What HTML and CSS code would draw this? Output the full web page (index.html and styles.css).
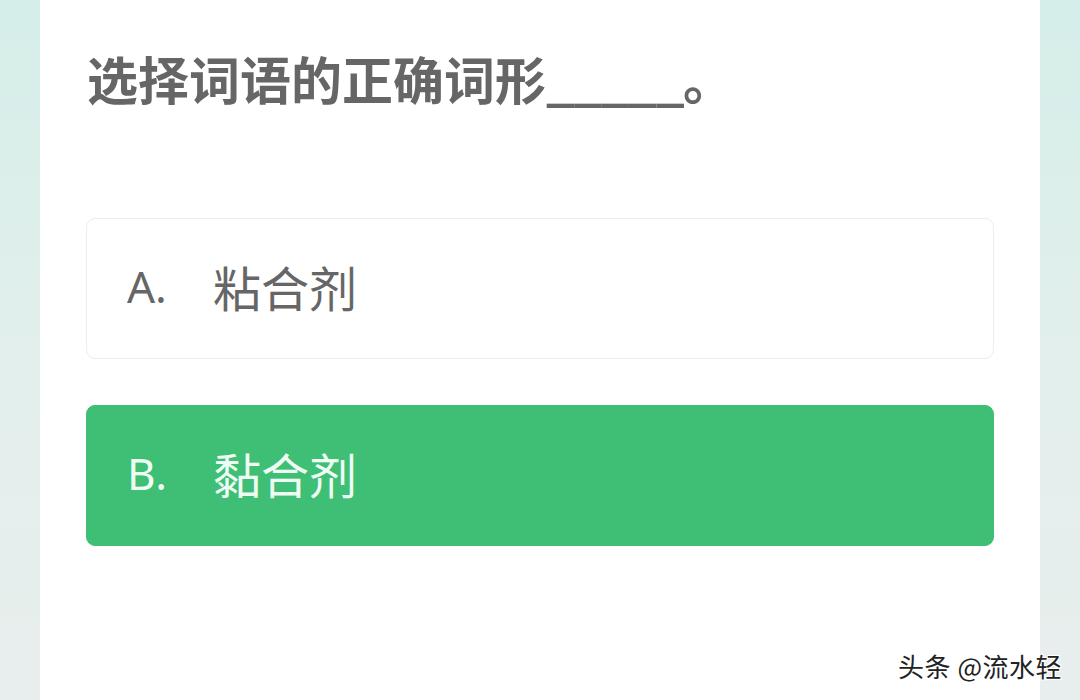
FILE: index.html
```html
<!DOCTYPE html>
<html lang="zh-CN">
<head>
<meta charset="utf-8">
<link rel="stylesheet" href="styles.css">
</head>
<body>
<div class="page">
  <div class="side side-left"></div>
  <main class="panel">
    <h1 class="question">选择词语的正确词形<span class="blank">_____</span>。</h1>
    <div class="options">
      <div class="option"><span class="label">A.</span><span class="text">粘合剂</span></div>
      <div class="option selected"><span class="label">B.</span><span class="text">黏合剂</span></div>
    </div>
    <div class="watermark">头条 @流水轻</div>
  </main>
  <div class="side side-right"></div>
</div>
</body>
</html>
```

FILE: styles.css
```css
* { box-sizing: border-box; }
html, body { margin: 0; padding: 0; }
body {
  width: 1080px;
  height: 700px;
  overflow: hidden;
  font-family: "Noto Sans CJK SC", "Noto Sans", sans-serif;
}
.page {
  display: flex;
  width: 1080px;
  height: 700px;
}
.side {
  width: 40px;
  flex: none;
  background: linear-gradient(180deg, #d5eee9 0%, #e2efec 50%, #e8eeed 100%);
}
.panel {
  position: relative;
  flex: 1;
  background: #ffffff;
  padding: 44px 46px 0 46px;
}
.question {
  margin: 0 0 0 1px;
  font-size: 51px;
  line-height: 68px;
  font-weight: 700;
  color: #666666;
}
.blank {
  letter-spacing: -1.5px;
}
.options {
  margin-top: 106px;
  display: flex;
  flex-direction: column;
  gap: 46px;
}
.option {
  height: 141px;
  border: 1px solid #ececec;
  border-radius: 9px;
  display: flex;
  align-items: center;
  padding-left: 40px;
  padding-bottom: 5px;
  color: #666666;
  font-size: 48px;
}
.option.selected {
  background: #3ebf75;
  border-color: #3ebf75;
  color: #eefcf3;
}
.label {
  width: 86px;
  font-family: "Noto Sans", "Noto Sans CJK SC", sans-serif;
  font-size: 44px;
}
.watermark {
  position: absolute;
  right: -22px;
  bottom: 16px;
  font-size: 26px;
  letter-spacing: 0.5px;
  color: #222;
  text-shadow: 1px 1px 0 #fff, -1px -1px 0 #fff, 1px -1px 0 #fff, -1px 1px 0 #fff;
}
```
